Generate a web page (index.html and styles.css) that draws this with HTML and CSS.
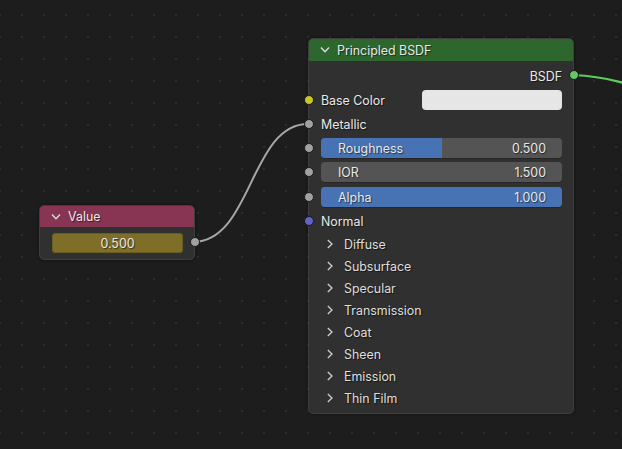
FILE: index.html
```html
<!DOCTYPE html>
<html>
<head>
<meta charset="utf-8">
<link rel="stylesheet" href="styles.css">
</head>
<body>
<div class="canvas">
  <svg class="links" width="622" height="449" viewBox="0 0 622 449">
    <path d="M193 242 C 252 242, 250 124, 308 124" class="link-gray"/>
    <path d="M573 75 C 600 76, 612 80, 624 83" class="link-green"/>
  </svg>

  <div class="node node-value">
    <div class="node-header header-value">
      <svg class="chev-down" width="10" height="6" viewBox="0 0 10 6"><path d="M1 0.5 L5 4.8 L9 0.5"/></svg>
      <span>Value</span>
    </div>
    <div class="node-body value-body">
      <div class="field field-olive">0.500</div>
      <span class="socket sock-gray sock-out"></span>
    </div>
  </div>

  <div class="node node-bsdf">
    <div class="node-header header-green">
      <svg class="chev-down" width="10" height="6" viewBox="0 0 10 6"><path d="M1 0.5 L5 4.8 L9 0.5"/></svg>
      <span>Principled BSDF</span>
    </div>
    <div class="node-body">
      <div class="row row-out"><span>BSDF</span><span class="socket sock-green sock-right"></span></div>
      <div class="row"><span class="socket sock-yellow"></span><span class="label">Base Color</span><div class="swatch"></div></div>
      <div class="row"><span class="socket sock-gray"></span><span class="label">Metallic</span></div>
      <div class="row"><span class="socket sock-gray"></span><div class="field slider"><div class="fill" style="width:50%"></div><span class="f-name">Roughness</span><span class="f-val">0.500</span></div></div>
      <div class="row"><span class="socket sock-gray"></span><div class="field slider"><span class="f-name">IOR</span><span class="f-val">1.500</span></div></div>
      <div class="row row-alpha"><span class="socket sock-gray"></span><div class="field slider"><div class="fill" style="width:100%"></div><span class="f-name">Alpha</span><span class="f-val">1.000</span></div></div>
      <div class="row"><span class="socket sock-purple"></span><span class="label">Normal</span></div>
      <div class="panel"><svg class="chev-right" width="6" height="10" viewBox="0 0 6 10"><path d="M0.8 1 L5 5 L0.8 9"/></svg><span>Diffuse</span></div>
      <div class="panel"><svg class="chev-right" width="6" height="10" viewBox="0 0 6 10"><path d="M0.8 1 L5 5 L0.8 9"/></svg><span>Subsurface</span></div>
      <div class="panel"><svg class="chev-right" width="6" height="10" viewBox="0 0 6 10"><path d="M0.8 1 L5 5 L0.8 9"/></svg><span>Specular</span></div>
      <div class="panel"><svg class="chev-right" width="6" height="10" viewBox="0 0 6 10"><path d="M0.8 1 L5 5 L0.8 9"/></svg><span>Transmission</span></div>
      <div class="panel"><svg class="chev-right" width="6" height="10" viewBox="0 0 6 10"><path d="M0.8 1 L5 5 L0.8 9"/></svg><span>Coat</span></div>
      <div class="panel"><svg class="chev-right" width="6" height="10" viewBox="0 0 6 10"><path d="M0.8 1 L5 5 L0.8 9"/></svg><span>Sheen</span></div>
      <div class="panel"><svg class="chev-right" width="6" height="10" viewBox="0 0 6 10"><path d="M0.8 1 L5 5 L0.8 9"/></svg><span>Emission</span></div>
      <div class="panel"><svg class="chev-right" width="6" height="10" viewBox="0 0 6 10"><path d="M0.8 1 L5 5 L0.8 9"/></svg><span>Thin Film</span></div>
    </div>
  </div>
</div>
</body>
</html>
```

FILE: styles.css
```css
html, body {
  margin: 0;
  padding: 0;
  background: #1d1d1d;
}
.canvas {
  position: relative;
  width: 622px;
  height: 449px;
  overflow: hidden;
  background-color: #1d1d1d;
  background-image: radial-gradient(circle at 1px 1px, #2d2d2d 0.9px, rgba(0,0,0,0) 1.4px);
  background-size: 22px 22px;
  background-position: -1px 14px;
  font-family: Inter, "DejaVu Sans", sans-serif;
  font-size: 12.4px;
  color: #e8e8e8;
  text-shadow: 1px 1px 1px rgba(0,0,0,0.55);
}
.links {
  position: absolute;
  left: 0;
  top: 0;
  fill: none;
}
.link-gray {
  stroke: #a7a7a7;
  stroke-width: 2;
}
.link-green {
  stroke: #5fcc5f;
  stroke-width: 2.2;
}
.node {
  position: absolute;
  background: #303030;
  border: 1px solid #3f3f3f;
  border-radius: 5px;
  box-shadow: 0 0 3px rgba(0,0,0,0.5);
}
.node-bsdf {
  left: 308px;
  top: 38px;
  width: 264px;
}
.node-value {
  left: 39px;
  top: 205px;
  width: 154px;
}
.node-header {
  display: flex;
  align-items: center;
  height: 22px;
  border-radius: 4px 4px 0 0;
  padding-left: 11px;
  gap: 7px;
}
.header-green {
  background: #2d672d;
}
.header-value {
  background: #873552;
  height: 21px;
  padding-left: 11px;
}
.chev-down {
  fill: none;
  stroke: #e0e0e0;
  stroke-width: 1.3;
}
.chev-right {
  fill: none;
  stroke: #d0d0d0;
  stroke-width: 1.3;
}
.node-body {
  position: relative;
  padding: 3px 0 4px;
}
.value-body {
  padding: 6px 11px 6px 12px;
}
.row {
  position: relative;
  height: 24px;
  display: flex;
  align-items: center;
  padding: 0 11px 0 12px;
}
.row-out {
  justify-content: flex-end;
}
.row-alpha {
  margin-top: 1px;
}
.label {
  flex: 1;
}
.socket {
  position: absolute;
  left: -5px;
  top: 7px;
  width: 8px;
  height: 8px;
  border-radius: 50%;
  border: 1px solid #1a1a1a;
  box-sizing: content-box;
}
.sock-right {
  left: auto;
  right: -6px;
  top: 6px;
}
.sock-out {
  left: auto;
  right: -6px;
  top: 10px;
}
.sock-gray { background: #a1a1a1; }
.sock-yellow { background: #c7c729; }
.sock-purple { background: #6363c7; }
.sock-green { background: #63c763; }
.swatch {
  width: 140px;
  height: 20px;
  border-radius: 4px;
  background: #e6e6e6;
}
.field {
  height: 20px;
  border-radius: 4px;
  box-sizing: border-box;
}
.field-olive {
  background: #7e6e28;
  display: flex;
  align-items: center;
  justify-content: center;
  box-shadow: inset 0 0 0 1px #6a5d22;
}
.slider {
  position: relative;
  flex: 1;
  display: flex;
  align-items: center;
  justify-content: space-between;
  padding: 0 16px 0 17px;
  background: #545454;
  overflow: hidden;
  box-shadow: 0 1px 0 #262626;
}
.fill {
  position: absolute;
  left: 0;
  top: 0;
  bottom: 0;
  background: #4772b3;
}
.f-name, .f-val {
  position: relative;
}
.panel {
  height: 22px;
  display: flex;
  align-items: center;
  padding-left: 18px;
  gap: 11px;
  color: #dedede;
}
```
